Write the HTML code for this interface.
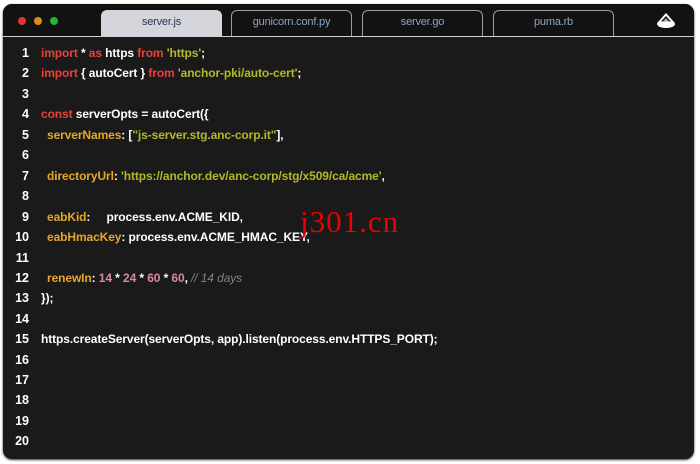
<!DOCTYPE html><html><head><style>
body{margin:0;width:700px;height:464px;background:#fff;position:relative;overflow:hidden;font-family:"Liberation Sans",sans-serif}
.win{position:absolute;left:3px;top:4px;width:691px;height:455px;background:#1a1a1a;border-radius:9px;box-shadow:0 1px 2px #3a2a4a}
.hdr{position:absolute;left:0;top:0;width:691px;height:32px;background:#121212;border-radius:9px 9px 0 0;border-bottom:1px solid #cfd2d8}
.dot{position:absolute;top:13px;width:8px;height:8px;border-radius:50%}
.tab{position:absolute;top:6px;width:119px;height:25px;border:1px solid #9a9ca2;border-bottom:none;border-radius:6px 6px 0 0;color:#8fa4c4;font-size:11px;text-align:center;line-height:22px;letter-spacing:-0.2px}
.tab.a{background:#d4d6dc;color:#2a3550;border-color:#d4d6dc}
.ln{position:absolute;left:0;width:29px;text-align:right;color:#fff;font-weight:bold;font-size:12.5px}
.cd{position:absolute;left:41px;color:#fff;font-size:12px;white-space:pre;letter-spacing:-0.1px;font-weight:bold}
.i{display:inline-block;width:6px}
.k{color:#e8423a}.s{color:#b3b82a}.p{color:#e6a62a}.n{color:#d88aa0}.c{color:#8a8078;font-style:italic;font-weight:normal}
.wm{position:absolute;left:300px;top:204px;color:#e00;font-family:"Liberation Serif",serif;font-size:31px;letter-spacing:1px}
</style></head><body>
<div class="win">
<div class="hdr">
<div class="dot" style="left:15px;background:#e0332f"></div>
<div class="dot" style="left:31px;background:#d99012"></div>
<div class="dot" style="left:47px;background:#22b33a"></div>
<div class="tab a" style="left:98px">server.js</div>
<div class="tab" style="left:228px">gunicorn.conf.py</div>
<div class="tab" style="left:359px">server.go</div>
<div class="tab" style="left:490px">puma.rb</div>
<svg style="position:absolute;left:652px;top:8px" width="22" height="18" viewBox="0 0 22 18"><ellipse cx="11" cy="12" rx="9" ry="4" fill="#fff"/><path d="M11 1 L19 10 L3 10Z" fill="#fff"/><path d="M11 4 L16 9.5 L6 9.5Z" fill="#121212"/><path d="M11 6 L14 9.5 L8 9.5Z" fill="#aaa"/></svg>
</div>
</div>
<div style="position:absolute;left:0;top:0">
<div class="ln" style="top:46px">1</div><div class="cd" style="top:46px"><span class="k">import</span> * <span class="k">as</span> https <span class="k">from</span> <span class="s">'https'</span>;</div>
<div class="ln" style="top:66px">2</div><div class="cd" style="top:66px"><span class="k">import</span> { autoCert } <span class="k">from</span> <span class="s">'anchor-pki/auto-cert'</span>;</div>
<div class="ln" style="top:87px">3</div>
<div class="ln" style="top:107px">4</div><div class="cd" style="top:107px"><span class="k">const</span> serverOpts = autoCert({</div>
<div class="ln" style="top:128px">5</div><div class="cd" style="top:128px"><span class="i"></span><span class="p">serverNames</span>: [<span class="s">"js-server.stg.anc-corp.it"</span>],</div>
<div class="ln" style="top:148px">6</div>
<div class="ln" style="top:169px">7</div><div class="cd" style="top:169px"><span class="i"></span><span class="p">directoryUrl</span>: <span class="s">'https://anchor.dev/anc-corp/stg/x509/ca/acme'</span>,</div>
<div class="ln" style="top:189px">8</div>
<div class="ln" style="top:210px">9</div><div class="cd" style="top:210px"><span class="i"></span><span class="p">eabKid</span>:     process.env.ACME_KID,</div>
<div class="ln" style="top:230px">10</div><div class="cd" style="top:230px"><span class="i"></span><span class="p">eabHmacKey</span>: process.env.ACME_HMAC_KEY,</div>
<div class="ln" style="top:251px">11</div>
<div class="ln" style="top:271px">12</div><div class="cd" style="top:271px"><span class="i"></span><span class="p">renewIn</span>: <span class="n">14</span> * <span class="n">24</span> * <span class="n">60</span> * <span class="n">60</span>, <span class="c">// 14 days</span></div>
<div class="ln" style="top:291px">13</div><div class="cd" style="top:291px">});</div>
<div class="ln" style="top:312px">14</div>
<div class="ln" style="top:332px">15</div><div class="cd" style="top:332px">https.createServer(serverOpts, app).listen(process.env.HTTPS_PORT);</div>
<div class="ln" style="top:353px">16</div>
<div class="ln" style="top:373px">17</div>
<div class="ln" style="top:393px">18</div>
<div class="ln" style="top:414px">19</div>
<div class="ln" style="top:434px">20</div>
</div>
<div class="wm">j301.cn</div>
</body></html>
